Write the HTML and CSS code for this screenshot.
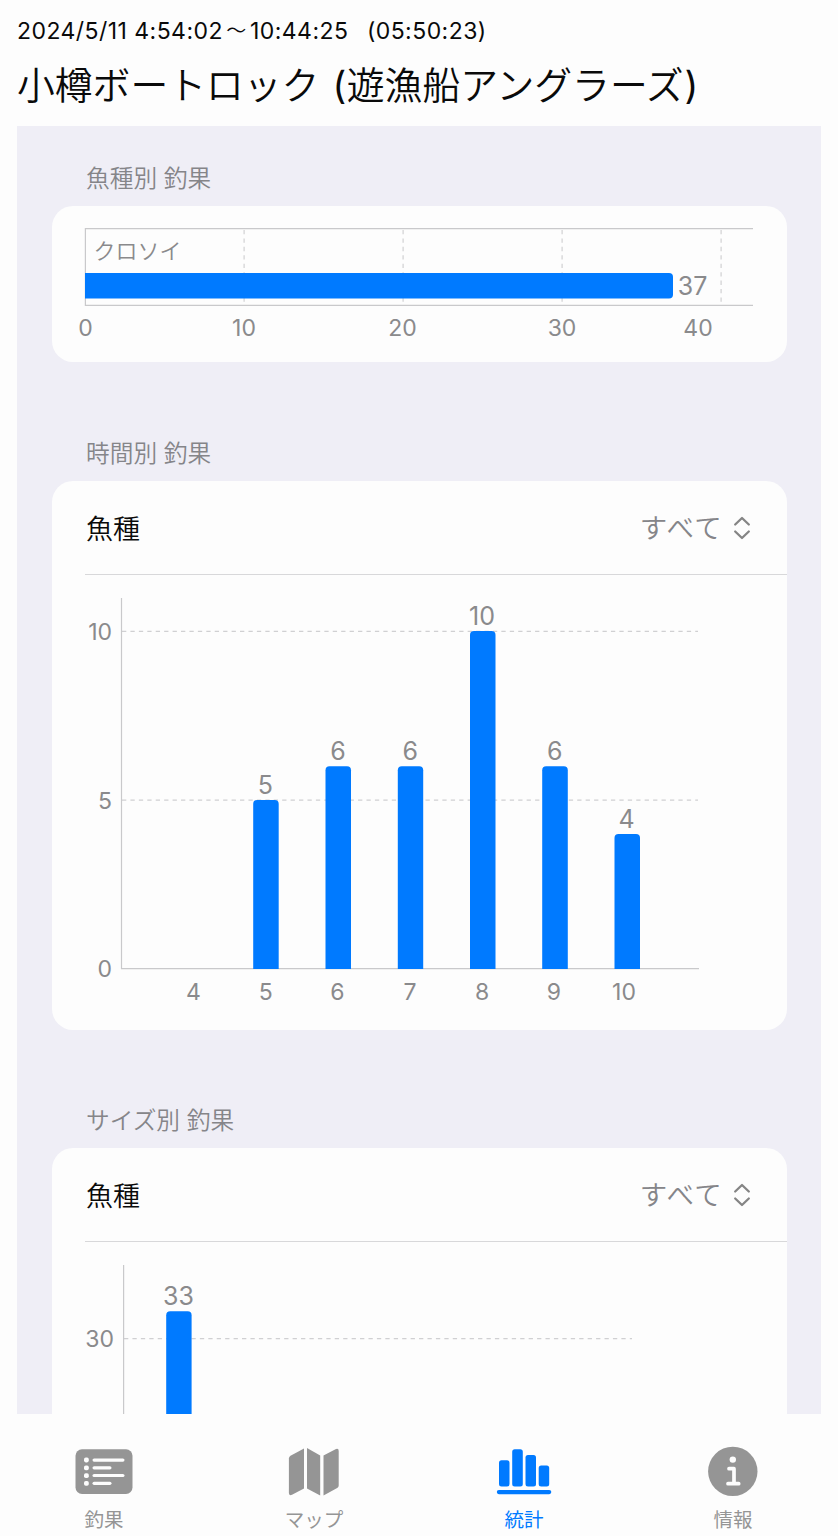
FILE: index.html
```html
<!DOCTYPE html>
<html lang="ja">
<head>
<meta charset="utf-8">
<title>統計</title>
<link rel="stylesheet" href="styles.css">
</head>
<body>
<div class="app">
  <header class="header">
    <div class="period"><span>2024/5/11 4:54:02</span><span class="wave">～</span><span>10:44:25</span><span class="duration">(05:50:23)</span></div>
    <h1 class="title">小樽ボートロック <span class="paren">(</span>遊漁船アングラーズ<span class="paren">)</span></h1>
  </header>

  <main class="panel">
    <h2 class="section-title first">魚種別 釣果</h2>
    <section class="card species">
      <svg class="chart" width="735" height="156" viewBox="52 206 735 156">
        <path class="axis" d="M753 228.700H85.400V305.400H753"/>
        <path class="grid" d="M244.100 230V303M403.100 230V303M562.100 230V303M721.100 230V303"/>
        <path class="bar" d="M85 273H669Q673 273 673 277V294.500Q673 298.500 669 298.500H85Z"/>
        <text class="name" x="93.500" y="259">クロソイ</text>
        <text class="value" x="692.500" y="295">37</text>
        <text class="tick" x="85.500" y="336">0</text>
        <text class="tick" x="244" y="336">10</text>
        <text class="tick" x="402.500" y="336">20</text>
        <text class="tick" x="562" y="336">30</text>
        <text class="tick" x="698" y="336">40</text>
      </svg>
    </section>

    <h2 class="section-title">時間別 釣果</h2>
    <section class="card hourly">
      <div class="picker">
        <span class="label">魚種</span>
        <span class="choice"><span class="all">すべて</span>
          <svg class="chevrons" width="18" height="24" viewBox="0 0 18 24"><path d="M2.200 8.500L9 2L15.800 8.500M2.200 15.500L9 22L15.800 15.500"/></svg>
        </span>
      </div>
      <svg class="chart" width="735" height="455" viewBox="52 575 735 455">
        <path class="grid" d="M122 631.300H698M122 800.200H698"/>
        <path class="axis" d="M121.500 598V968.600H699"/>
        <path class="bar" d="M253.200 969V804Q253.200 800 257.200 800H274.700Q278.700 800 278.700 804V969Z"/>
        <path class="bar" d="M325.500 969V770.200Q325.500 766.200 329.500 766.200H347Q351 766.200 351 770.200V969Z"/>
        <path class="bar" d="M397.800 969V770.200Q397.800 766.200 401.800 766.200H419.200Q423.200 766.200 423.200 770.200V969Z"/>
        <path class="bar" d="M470 969V635Q470 631 474 631H491.500Q495.500 631 495.500 635V969Z"/>
        <path class="bar" d="M542.200 969V770.200Q542.200 766.200 546.200 766.200H563.800Q567.800 766.200 567.800 770.200V969Z"/>
        <path class="bar" d="M614.500 969V838Q614.500 834 618.500 834H636Q640 834 640 838V969Z"/>
        <text class="value" x="265.300" y="794">5</text>
        <text class="value" x="338" y="760">6</text>
        <text class="value" x="410.300" y="760">6</text>
        <text class="value" x="482" y="625">10</text>
        <text class="value" x="554.700" y="760">6</text>
        <text class="value" x="626.500" y="827.500">4</text>
        <text class="tick end" x="112" y="640">10</text>
        <text class="tick end" x="112" y="808.500">5</text>
        <text class="tick end" x="112" y="977">0</text>
        <text class="tick" x="193.500" y="999.500">4</text>
        <text class="tick" x="265.700" y="999.500">5</text>
        <text class="tick" x="337.500" y="999.500">6</text>
        <text class="tick" x="410" y="999.500">7</text>
        <text class="tick" x="482" y="999.500">8</text>
        <text class="tick" x="554" y="999.500">9</text>
        <text class="tick" x="624" y="999.500">10</text>
      </svg>
    </section>

    <h2 class="section-title size-title">サイズ別 釣果</h2>
    <section class="card size">
      <div class="picker">
        <span class="label">魚種</span>
        <span class="choice"><span class="all">すべて</span>
          <svg class="chevrons" width="18" height="24" viewBox="0 0 18 24"><path d="M2.200 8.500L9 2L15.800 8.500M2.200 15.500L9 22L15.800 15.500"/></svg>
        </span>
      </div>
      <svg class="chart" width="735" height="172" viewBox="52 1242 735 172">
        <path class="grid" d="M124 1338.600H632"/>
        <path class="axis" d="M123.600 1265V1414"/>
        <path class="bar" d="M166.200 1414V1315.200Q166.200 1311.200 170.200 1311.200H187.600Q191.600 1311.200 191.600 1315.200V1414Z"/>
        <text class="value" x="178.500" y="1305">33</text>
        <text class="tick end" x="114" y="1347">30</text>
      </svg>
    </section>
  </main>

  <nav class="tabs">
    <a class="tab">
      <svg width="70" height="60" viewBox="0 0 70 60"><rect x="6.500" y="9.300" width="57" height="44.700" rx="6.500" fill="currentColor"/><g fill="#fdfdfd"><rect x="15" y="17.600" width="4.800" height="4.800" rx="1.800"/><rect x="15" y="25.400" width="4.800" height="4.800" rx="1.800"/><rect x="15" y="33.200" width="4.800" height="4.800" rx="1.800"/><rect x="15" y="41" width="4.800" height="4.800" rx="1.800"/><rect x="23.500" y="18.500" width="32" height="3.200" rx="1.600"/><rect x="23.500" y="26.200" width="19" height="3.200" rx="1.600"/><rect x="23.500" y="33.900" width="32" height="3.200" rx="1.600"/><rect x="23.500" y="41.700" width="19" height="3.200" rx="1.600"/></g></svg>
      <span>釣果</span>
    </a>
    <a class="tab">
      <svg width="70" height="60" viewBox="0 0 70 60"><g fill="currentColor"><path d="M9.900 18.500Q9.900 16.600 11.500 15.700L25 8.500V48.500L13 54.700Q9.900 56.100 9.900 53Z"/><path d="M28 8L41.200 15.500V55.500L28 48.500Z"/><path d="M44.500 15.500L57 8.900Q59.700 7.900 59.700 11V45.500Q59.700 47.200 58.200 48L44.500 55.500Z"/></g></svg>
      <span>マップ</span>
    </a>
    <a class="tab active">
      <svg width="70" height="60" viewBox="0 0 70 60"><g fill="currentColor"><rect x="10" y="20.300" width="10.500" height="26.200" rx="2.500"/><rect x="23.200" y="9.300" width="10.600" height="37.200" rx="2.500"/><rect x="36.500" y="15.100" width="10.500" height="31.400" rx="2.500"/><rect x="49.700" y="25.600" width="10.500" height="20.900" rx="2.500"/><rect x="7.800" y="50" width="54.500" height="4.200" rx="2.100"/></g></svg>
      <span>統計</span>
    </a>
    <a class="tab info">
      <svg width="70" height="60" viewBox="0 0 70 60"><circle cx="34.800" cy="31.400" r="24.700" fill="currentColor"/><circle cx="34.800" cy="19.600" r="3.200" fill="#fdfdfd"/><path d="M31 28.700H36V43M30 43.700H40.700" fill="none" stroke="#fdfdfd" stroke-width="3.700" stroke-linecap="round" stroke-linejoin="round"/></svg>
      <span>情報</span>
    </a>
  </nav>
</div>
</body>
</html>
```
FILE: styles.css
```css
* { box-sizing: border-box; }

body {
  margin: 0;
  background: #fdfdfd;
  color: #0a0a0a;
  font-family: Inter, "Noto Sans CJK JP", sans-serif;
  font-weight: 400;
}

.app {
  display: flex;
  flex-direction: column;
  width: 838px;
  height: 1536px;
  overflow: hidden;
}

.header {
  height: 126px;
  padding: 16px 17px 0;
  flex: none;
}

.period {
  display: flex;
  height: 30px;
  font-size: 23px;
  letter-spacing: 0.450px;
  line-height: 30px;
  white-space: nowrap;
}

.wave { width: 27px; text-align: center; font-size: 20px; font-weight: 350; }
.duration { margin-left: 18.500px; }

.title {
  margin: 13px 0 0;
  font-size: 37.800px;
  font-weight: 350;
  line-height: 52px;
  word-spacing: 1.500px;
  white-space: nowrap;
}

.paren { padding: 0 0.500px 0 1px; font-weight: 400; }

.panel {
  flex: none;
  height: 1288px;
  margin: 0 17px;
  padding: 0 34px 0 35px;
  background: #efeef6;
  overflow: hidden;
}

.section-title {
  height: 119px;
  margin: 0;
  padding: 77px 0 0 34px;
  color: #858589;
  font-size: 23.700px;
  font-weight: 350;
  line-height: 30px;
}

.section-title.first { height: 80px; padding-top: 38px; }
.section-title.size-title { height: 118px; padding-top: 76px; }

.card {
  background: #fdfdfd;
  border-radius: 21px;
  overflow: hidden;
}

.species { height: 156px; }
.hourly { height: 549px; }
.size { height: 420px; }

.picker {
  display: flex;
  justify-content: space-between;
  align-items: center;
  height: 94px;
  margin-left: 33px;
  padding-right: 36px;
  border-bottom: 1px solid #d8d8da;
  font-family: "Noto Sans CJK JP", sans-serif;
  font-size: 27px;
  font-weight: 350;
}

.label { padding-left: 1px; }

.choice {
  display: flex;
  align-items: center;
  gap: 10px;
  color: #858589;
}

.all {
  padding-bottom: 3px;
  font-size: 27.500px;
  letter-spacing: 1.300px;
}

.chevrons path {
  fill: none;
  stroke: #858585;
  stroke-width: 2.300;
  stroke-linecap: round;
  stroke-linejoin: round;
}

.chart { display: block; }

.axis { fill: none; stroke: #c9c9cb; stroke-width: 1.200; }
.grid { fill: none; stroke: #d0d0d2; stroke-width: 1.200; stroke-dasharray: 4.300 4.130; }
.bar { fill: #007aff; }

.chart text { fill: #8a8a8c; text-anchor: middle; }
.chart .value { font-size: 25px; }
.chart .tick { font-size: 23px; }
.chart text.end { text-anchor: end; }
.chart text.name {
  font-family: "Noto Sans CJK JP", sans-serif;
  font-size: 22px;
  font-weight: 350;
  text-anchor: start;
}

.tabs {
  flex: none;
  display: grid;
  grid-template-columns: repeat(4, 210px);
  height: 122px;
  padding-top: 26px;
}

.tab {
  display: flex;
  flex-direction: column;
  align-items: center;
  width: 208px;
  color: #959595;
  font-family: "Noto Sans CJK JP", sans-serif;
  font-size: 19.500px;
  font-weight: 400;
  line-height: 28px;
}

.tab svg { flex: none; }
.tab span { margin-top: 5px; }
.tab.info { width: 206px; }
.tab.active { color: #007aff; }
```
